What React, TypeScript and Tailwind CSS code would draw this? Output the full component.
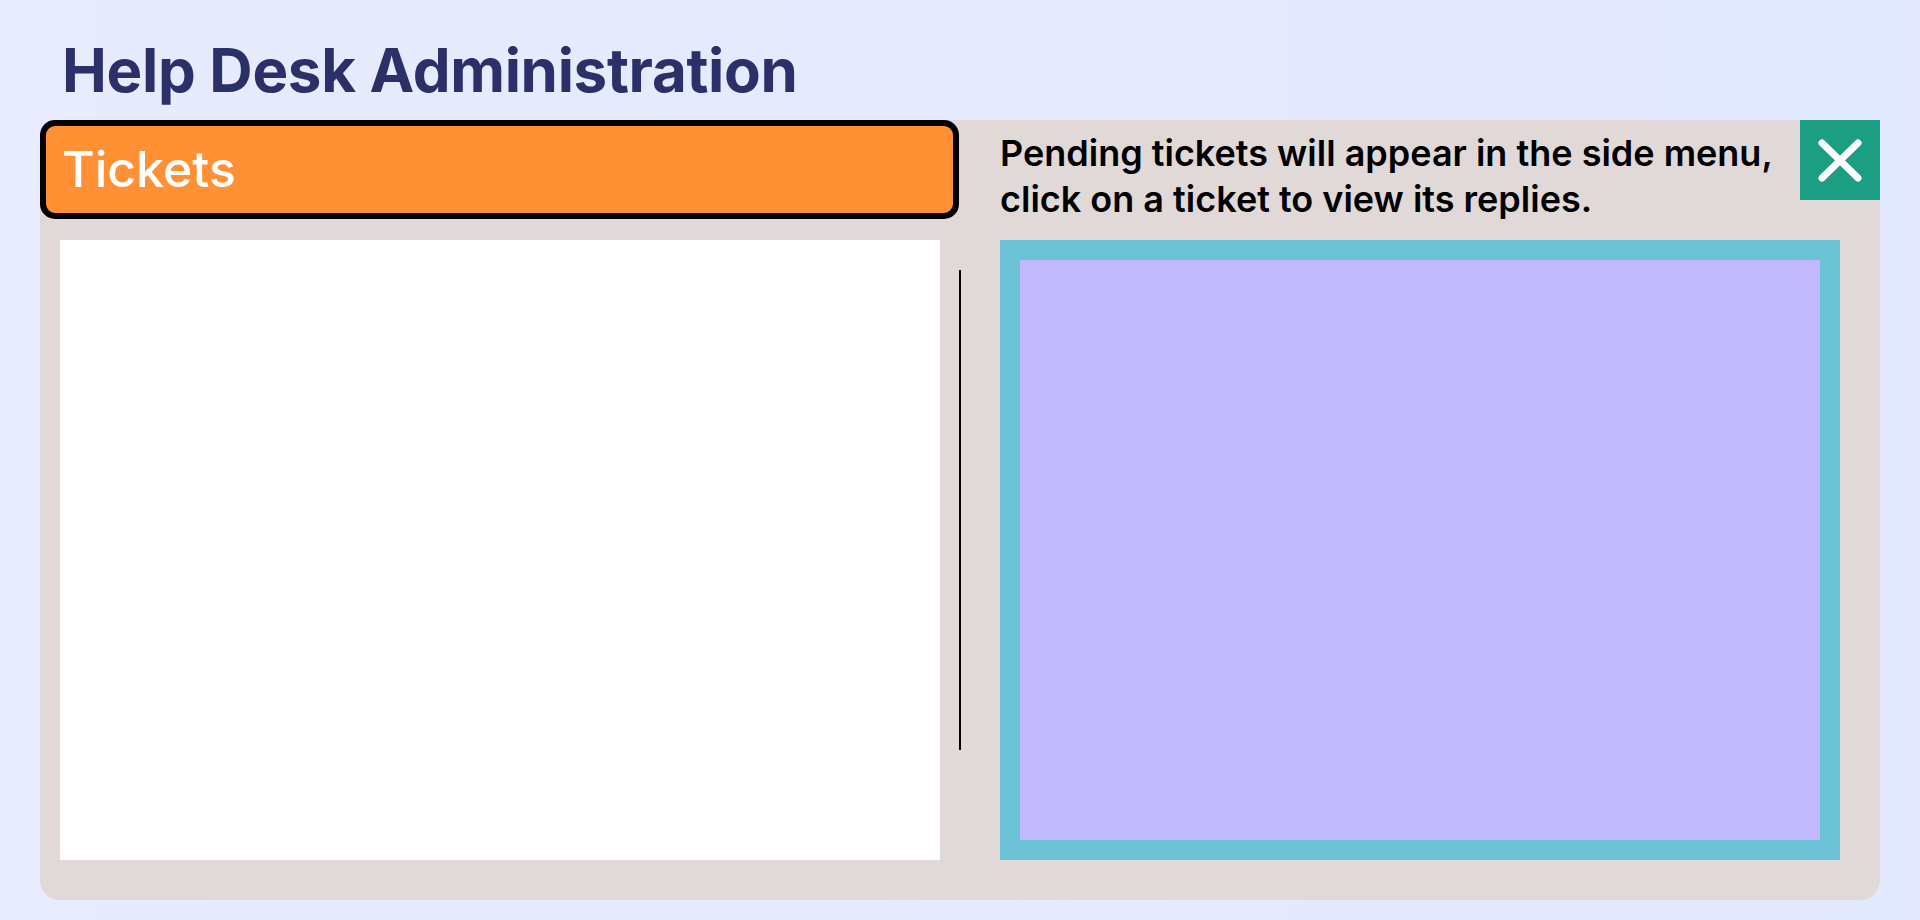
import React from "react";

export default function App() {
  return (
    <div
      className="min-h-screen w-full bg-gradient-to-r from-[#e8ebfd] to-[#e2e8fe] px-[40px] pb-[20px]"
      style={{ fontFamily: "Inter, 'Noto Sans', sans-serif" }}
    >
      <h1 className="pl-[22px] pt-[40px] pb-[20px] text-[60px] leading-[60px] font-bold text-[#2b3069] tracking-[-0.3px]">
        Help Desk Administration
      </h1>
      <div className="flex h-[780px] w-[1840px] rounded-[20px] bg-[#e1d9d8]">
        {/* Left column */}
        <div className="flex w-[919px] flex-col">
          <div className="flex h-[99px] w-[919px] items-center rounded-[15px] border-[6px] border-black bg-[#ff9033] pl-[16px]">
            <span className="text-[50px] font-medium text-white">Tickets</span>
          </div>
          <div className="ml-[20px] mt-[21px] h-[620px] w-[880px] bg-white" />
        </div>
        {/* Separator */}
        <div className="mt-[150px] h-[480px] w-[2px] bg-black" />
        {/* Right column */}
        <div className="ml-[39px] flex flex-1 flex-col">
          <div className="flex h-[120px] items-start justify-between">
            <p className="pt-[10px] text-[36px] leading-[46px] font-semibold text-black">
              Pending tickets will appear in the side menu,
              <br />
              click on a ticket to view its replies.
            </p>
            <button className="flex h-[80px] w-[80px] shrink-0 items-center justify-center bg-[#1b9e84]">
              <svg width="80" height="80" viewBox="0 0 80 80">
                <path
                  d="M22 23 L58 58 M58 23 L22 58"
                  stroke="white"
                  strokeWidth="7"
                  strokeLinecap="round"
                  fill="none"
                />
              </svg>
            </button>
          </div>
          <div className="h-[620px] w-[840px] border-[20px] border-[#6cc3d6] bg-[#c1b8fe]" />
        </div>
      </div>
    </div>
  );
}
